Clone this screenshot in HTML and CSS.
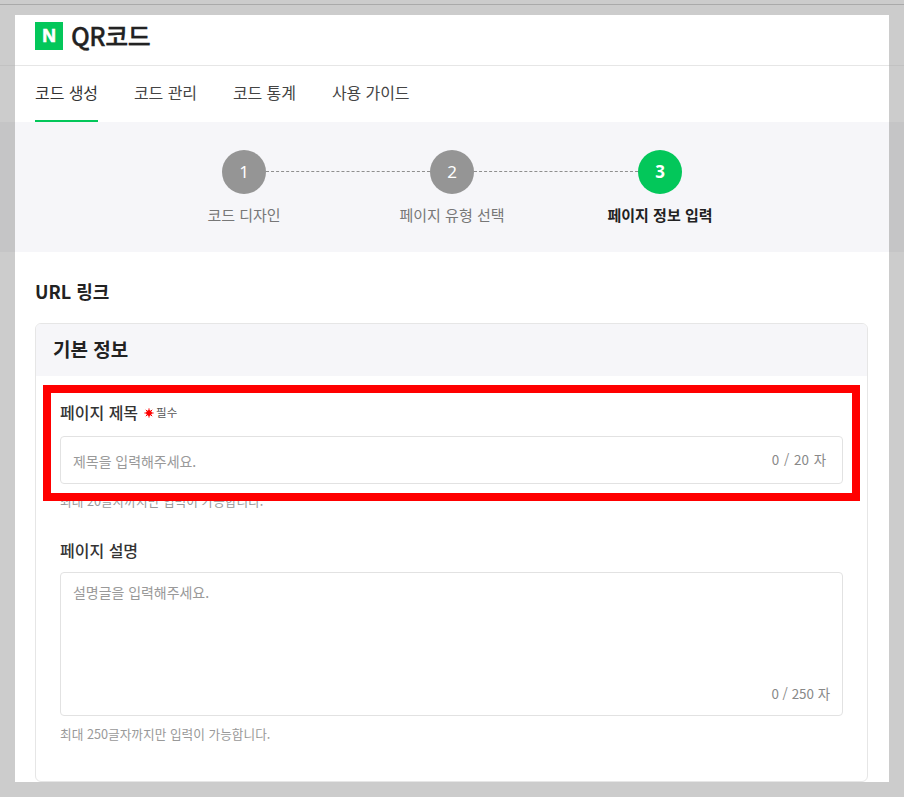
FILE: index.html
```html
<!DOCTYPE html>
<html lang="ko">
<head>
<meta charset="utf-8">
<title>QR코드</title>
<link rel="stylesheet" href="styles.css">
</head>
<body>
<main class="panel">
  <header class="brand">
    <span class="logo">N</span>
    <h1 class="brand-name">QR코드</h1>
  </header>
  <nav class="tabs">
    <a class="tab tab-active">코드 생성</a>
    <a class="tab">코드 관리</a>
    <a class="tab">코드 통계</a>
    <a class="tab">사용 가이드</a>
  </nav>
  <section class="stepper">
    <div class="step">
      <span class="step-num">1</span>
      <span class="step-label">코드 디자인</span>
    </div>
    <div class="step">
      <span class="step-num">2</span>
      <span class="step-label">페이지 유형 선택</span>
    </div>
    <div class="step step-current">
      <span class="step-num">3</span>
      <span class="step-label">페이지 정보 입력</span>
    </div>
  </section>
  <section class="content">
    <h2 class="page-title">URL 링크</h2>
    <div class="card">
      <h3 class="card-title">기본 정보</h3>
      <div class="card-body">
        <div class="field field-title">
          <div class="field-label">페이지 제목
            <svg class="req-icon" viewBox="0 0 10 10" aria-hidden="true"><path d="M5 .4v9.2M.4 5h9.2M1.8 1.8l6.4 6.4M8.2 1.8L1.8 8.2" /><circle cx="5" cy="5" r="2.4"/></svg><span class="req-text">필수</span>
          </div>
          <div class="input">
            <span class="placeholder">제목을 입력해주세요.</span>
            <span class="counter">0 / 20 자</span>
          </div>
          <p class="help">최대 20글자까지만 입력이 가능합니다.</p>
        </div>
        <div class="field">
          <div class="field-label">페이지 설명</div>
          <div class="textarea">
            <span class="placeholder">설명글을 입력해주세요.</span>
            <span class="counter counter-end">0 / 250 자</span>
          </div>
          <p class="help help-last">최대 250글자까지만 입력이 가능합니다.</p>
        </div>
      </div>
    </div>
  </section>
  <div class="highlight"></div>
</main>
</body>
</html>
```
FILE: styles.css
```css
* { box-sizing: border-box; }
html, body { margin: 0; height: 100%; }
body {
  height: 797px;
  overflow: hidden;
  padding: 15px 15px 0;
  font-family: "Noto Sans CJK KR", "Noto Sans", sans-serif;
  color: #222;
  background-color: #ccc;
  background-image:
    linear-gradient(#aaa, #aaa),
    linear-gradient(#c2c2c2, #c2c2c2),
    linear-gradient(#c5c5c6, #c5c5c6);
  background-repeat: no-repeat;
  background-size: 100% 1px, 100% 1px, 100% 130px;
  background-position: 0 4px, 0 65px, 0 122px;
}
.panel {
  position: relative;
  width: 874px;
  height: 767px;
  background: #fff;
  overflow: hidden;
}
.brand {
  display: flex;
  align-items: center;
  height: 51px;
  padding: 0 20px 8px;
  border-bottom: 1px solid #e6e6e6;
  gap: 8px;
}
.logo {
  width: 28px;
  height: 28px;
  background: #03c75a;
  color: #fff;
  font-family: "Liberation Sans", sans-serif;
  font-size: 19px;
  font-weight: 700;
  line-height: 28px;
  text-align: center;
  -webkit-text-stroke: 0.6px #fff;
}
.brand-name {
  margin: 0 0 3px;
  font-size: 25px;
  font-weight: 500;
  line-height: 36px;
  letter-spacing: -0.5px;
  color: #222;
  -webkit-text-stroke: 0.3px #222;
}
.tabs {
  display: flex;
  gap: 36px;
  height: 56px;
  padding: 0 20px;
}
.tab {
  display: block;
  height: 56px;
  padding-top: 14px;
  font-size: 16px;
  line-height: 24px;
  color: #444;
  letter-spacing: -0.08px;
}
.tab-active {
  color: #333;
  border-bottom: 2px solid #03c75a;
}
.stepper {
  display: flex;
  justify-content: center;
  height: 130px;
  padding-top: 28px;
  background: #f6f6f9;
}
.step {
  position: relative;
  display: flex;
  flex-direction: column;
  align-items: center;
  width: 208px;
}
.step + .step::before {
  content: "";
  position: absolute;
  top: 21px;
  right: 126px;
  width: 164px;
  border-top: 1px dashed #8f8f8f;
}
.step-num {
  width: 44px;
  height: 44px;
  border-radius: 50%;
  background: #959595;
  color: #fff;
  font-family: "Noto Sans", sans-serif;
  font-size: 17px;
  line-height: 44px;
  text-align: center;
}
.step-label {
  margin-top: 11px;
  font-size: 15px;
  line-height: 20px;
  color: #777;
}
.step-current .step-num {
  background: #03c75a;
  font-weight: 700;
}
.step-current .step-label {
  color: #222;
  font-weight: 700;
}
.content {
  padding: 26px 21px 0 20px;
}
.page-title {
  margin: 0 0 18px;
  font-size: 18px;
  font-weight: 700;
  line-height: 27px;
  color: #222;
}
.card {
  height: 459px;
  border: 1px solid #e6e6e6;
  border-radius: 6px;
  overflow: hidden;
}
.card-title {
  margin: 0;
  height: 52px;
  padding: 11px 17px 0;
  background: #f6f6f9;
  font-size: 19px;
  font-weight: 700;
  line-height: 27px;
  color: #222;
}
.card-body {
  padding: 24px 24px 0;
}
.field-title {
  margin-bottom: 28px;
}
.field-label {
  display: flex;
  align-items: center;
  height: 24px;
  font-size: 16px;
  font-weight: 500;
  line-height: 24px;
  color: #333;
}
.req-icon {
  width: 10px;
  height: 10px;
  margin: 2px 2px 0 6px;
  fill: #f00;
  stroke: #f00;
  stroke-width: 1;
}
.req-text {
  font-size: 11.5px;
  font-weight: 400;
  color: #555;
}
.input, .textarea {
  display: flex;
  justify-content: space-between;
  width: 783px;
  border: 1px solid #e2e2e2;
  border-radius: 4px;
  background: #fff;
}
.input {
  align-items: center;
  height: 48px;
  margin-top: 12px;
  padding: 0 16px 0 12px;
}
.textarea {
  height: 144px;
  margin-top: 10px;
  padding: 9px 12px;
  align-items: flex-start;
}
.placeholder {
  font-size: 14px;
  line-height: 20px;
  color: #999;
  letter-spacing: -0.05px;
}
.input .placeholder { margin-top: 2px; }
.counter {
  font-size: 13.4px;
  line-height: 20px;
  color: #888;
}
.input .counter { margin-top: -2px; word-spacing: 1px; }
.counter-end {
  align-self: flex-end;
  margin-bottom: 3px;
}
.help {
  margin: 8px 0 0;
  font-size: 12.7px;
  line-height: 18px;
  color: #999;
}
.help-last { margin-top: 9px; }
.highlight {
  position: absolute;
  left: 28px;
  top: 370px;
  width: 817px;
  height: 116px;
  border: 8px solid #f00;
}
```
